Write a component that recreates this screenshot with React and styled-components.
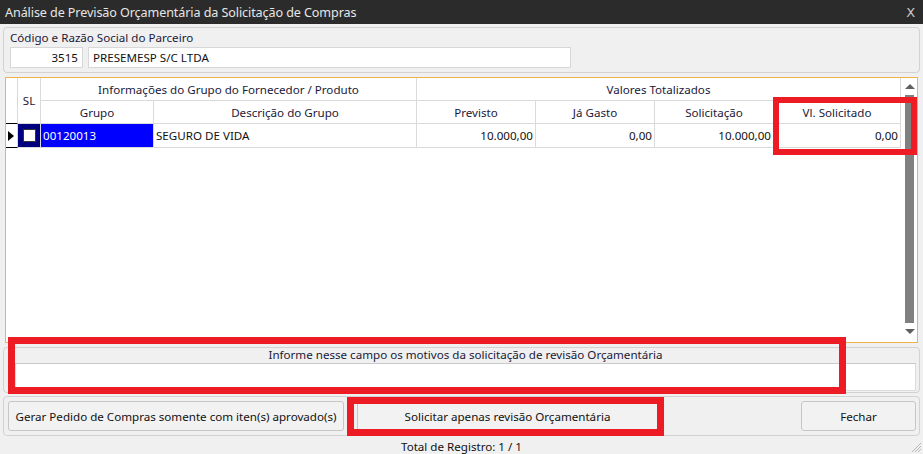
import React from "react";
import styled, { createGlobalStyle } from "styled-components";

const Global = createGlobalStyle`
  html, body { margin: 0; padding: 0; background: #f0f0f0; }
  body { font-family: "Noto Sans", "Open Sans", sans-serif; font-size: 11.6px; color: #111; }
  * { box-sizing: border-box; }
`;

const Window = styled.div`
  position: relative;
  width: 923px;
  height: 454px;
  background: #f0f0f0;
  display: flex;
  flex-direction: column;
  overflow: hidden;
`;

const TitleBar = styled.div`
  height: 24px;
  flex: none;
  background: #2b2b2b;
  color: #e6e6e6;
  display: flex;
  align-items: center;
  justify-content: space-between;
  padding: 0 8px 0 5px;
  font-size: 12.6px;
  letter-spacing: -0.1px;
`;

const CloseGlyph = styled.span`
  font-size: 13px;
  color: #c8c8c8;
  font-family: "DejaVu Sans", sans-serif;
`;

const GroupBox = styled.div`
  margin: ${(p) => p.$mt || 0}px 3px 0 3px;
  height: ${(p) => p.$h}px;
  border: 1px solid #d2d2d2;
  border-radius: 4px;
  flex: none;
`;

const PartnerGroup = styled(GroupBox)`
  padding: 2px 0 0 6px;
  display: flex;
  flex-direction: column;
`;

const FieldLabel = styled.div`
  height: 16px;
  line-height: 16px;
  color: #1a1a3a;
`;

const InputRow = styled.div`
  display: flex;
  gap: 5px;
  margin-top: 1px;
`;

const TextBox = styled.div`
  width: ${(p) => p.$w}px;
  height: 21px;
  background: #fff;
  border: 1px solid #d7d7d7;
  line-height: 19px;
  padding: 0 4px;
  text-align: ${(p) => p.$align || "left"};
  color: #111;
`;

const GridFrame = styled.div`
  margin: 4px 5px 0 5px;
  height: 266px;
  flex: none;
  border: 1px solid #f0b34a;
  background: #fff;
  display: flex;
`;

const GridBody = styled.div`
  width: 895px;
  display: grid;
  grid-template-columns: 12px 23px 113px 263px 119px 119px 119px 127px;
  grid-template-rows: 23px 23px 24px;
  align-content: start;
`;

const HeadCell = styled.div`
  grid-column: ${(p) => p.$col};
  grid-row: ${(p) => p.$row};
  border-right: 1px solid #dadada;
  border-bottom: 1px solid ${(p) => (p.$dark ? "#000" : "#dadada")};
  display: flex;
  align-items: center;
  justify-content: center;
  color: #1a1a3a;
  white-space: nowrap;
`;

const Cell = styled.div`
  border-right: 1px solid #dadada;
  border-bottom: 1px solid #dadada;
  display: flex;
  align-items: center;
  justify-content: ${(p) => (p.$right ? "flex-end" : "flex-start")};
  padding: ${(p) => (p.$right ? "0 2px 0 0" : "0 0 0 2px")};
  background: ${(p) => p.$bg || "#fff"};
  color: ${(p) => p.$fg || "#111"};
  white-space: nowrap;
`;

const IndicatorCell = styled.div`
  border-right: 1px solid #dadada;
  border-bottom: 1px solid #000;
  display: flex;
  align-items: center;
  padding-left: 2px;
`;

const Arrow = styled.div`
  width: 0;
  height: 0;
  border-top: 5px solid transparent;
  border-bottom: 5px solid transparent;
  border-left: 6px solid #000;
`;

const CheckCell = styled.div`
  background: #00007f;
  border-right: 1px solid #dadada;
  border-bottom: 1px solid #dadada;
  display: flex;
  align-items: center;
  justify-content: center;
`;

const CheckBox = styled.div`
  width: 13px;
  height: 13px;
  background: #fff;
  border: 1px solid #333;
  margin-left: 1px;
`;

const ScrollBar = styled.div`
  width: 17px;
  display: flex;
  flex-direction: column;
  align-items: center;
  padding-top: 6px;
`;

const ScrollArrow = styled.div`
  width: 0;
  height: 0;
  border-left: 5px solid transparent;
  border-right: 5px solid transparent;
  ${(p) => (p.$down ? "border-top: 5px solid #606060;" : "border-bottom: 5px solid #606060;")}
  margin-left: 1px;
`;

const Thumb = styled.div`
  width: 9px;
  height: 228px;
  margin: 6px 0 6px 1px;
  background: #808080;
`;

const MotivoGroup = styled(GroupBox)`
  padding: 0 3px 1px 11px;
  display: flex;
  flex-direction: column;
`;

const MotivoLabel = styled.div`
  height: 16px;
  border-bottom: 1px solid #c9c9c9;
  text-align: center;
  line-height: 14px;
  color: #1a1a3a;
`;

const MotivoInput = styled.div`
  flex: 1;
  background: #fff;
  border: 1px solid #dcdcdc;
  border-top: none;
`;

const ButtonGroup = styled(GroupBox)`
  display: flex;
  align-items: center;
  padding: 0 3px 0 4px;
`;

const Button = styled.div`
  width: ${(p) => p.$w}px;
  height: 30px;
  margin-left: ${(p) => (p.$auto ? "auto" : `${p.$ml || 0}px`)};
  border: 1px solid #c6c6c6;
  border-radius: 3px;
  background: #f2f2f2;
  display: flex;
  align-items: center;
  justify-content: center;
  color: #111;
  white-space: nowrap;
`;

const StatusBar = styled.div`
  flex: 1;
  display: flex;
  align-items: center;
  justify-content: center;
  position: relative;
  padding-top: 2px;
  color: #111;
`;

const Grip = styled.svg`
  position: absolute;
  right: 1px;
  bottom: 1px;
`;

const Annotation = styled.div`
  position: absolute;
  left: ${(p) => p.$x}px;
  top: ${(p) => p.$y}px;
  width: ${(p) => p.$w}px;
  height: ${(p) => p.$h}px;
  border: ${(p) => p.$t}px solid #ed1c24;
  pointer-events: none;
`;

export default function App() {
  return (
    <>
      <Global />
      <Window>
        <TitleBar>
          <span>Análise de Previsão Orçamentária da Solicitação de Compras</span>
          <CloseGlyph>X</CloseGlyph>
        </TitleBar>

        <PartnerGroup $mt={3} $h={46}>
          <FieldLabel>Código e Razão Social do Parceiro</FieldLabel>
          <InputRow>
            <TextBox $w={73} $align="right">3515</TextBox>
            <TextBox $w={483}>PRESEMESP S/C LTDA</TextBox>
          </InputRow>
        </PartnerGroup>

        <GridFrame>
          <GridBody>
            <HeadCell $col="1" $row="1 / span 2" $dark />
            <HeadCell $col="2" $row="1 / span 2">SL</HeadCell>
            <HeadCell $col="3 / span 2" $row="1">Informações do Grupo do Fornecedor / Produto</HeadCell>
            <HeadCell $col="5 / span 4" $row="1">Valores Totalizados</HeadCell>
            <HeadCell $col="3" $row="2">Grupo</HeadCell>
            <HeadCell $col="4" $row="2">Descrição do Grupo</HeadCell>
            <HeadCell $col="5" $row="2">Previsto</HeadCell>
            <HeadCell $col="6" $row="2">Já Gasto</HeadCell>
            <HeadCell $col="7" $row="2">Solicitação</HeadCell>
            <HeadCell $col="8" $row="2">Vl. Solicitado</HeadCell>

            <IndicatorCell><Arrow /></IndicatorCell>
            <CheckCell><CheckBox /></CheckCell>
            <Cell $bg="#0000ff" $fg="#fff">00120013</Cell>
            <Cell>SEGURO DE VIDA</Cell>
            <Cell $right>10.000,00</Cell>
            <Cell $right>0,00</Cell>
            <Cell $right>10.000,00</Cell>
            <Cell $right>0,00</Cell>
          </GridBody>
          <ScrollBar>
            <ScrollArrow />
            <Thumb />
            <ScrollArrow $down />
          </ScrollBar>
        </GridFrame>

        <MotivoGroup $mt={4} $h={46}>
          <MotivoLabel>Informe nesse campo os motivos da solicitação de revisão Orçamentária</MotivoLabel>
          <MotivoInput />
        </MotivoGroup>

        <ButtonGroup $mt={3} $h={40}>
          <Button $w={336}>Gerar Pedido de Compras somente com iten(s) aprovado(s)</Button>
          <Button $w={301} $ml={13}>Solicitar apenas revisão Orçamentária</Button>
          <Button $w={115} $auto>Fechar</Button>
        </ButtonGroup>

        <StatusBar>
          Total de Registro: 1 / 1
          <Grip width="12" height="12" viewBox="0 0 12 12">
            <path d="M11 2 L2 11 M11 5 L5 11 M11 8 L8 11" stroke="#b8b8b8" strokeWidth="1" />
          </Grip>
        </StatusBar>

        <Annotation $x={773} $y={97} $w={144} $h={58} $t={6} />
        <Annotation $x={8} $y={337} $w={838} $h={57} $t={7} />
        <Annotation $x={347} $y={397} $w={317} $h={39} $t={7} />
      </Window>
    </>
  );
}
